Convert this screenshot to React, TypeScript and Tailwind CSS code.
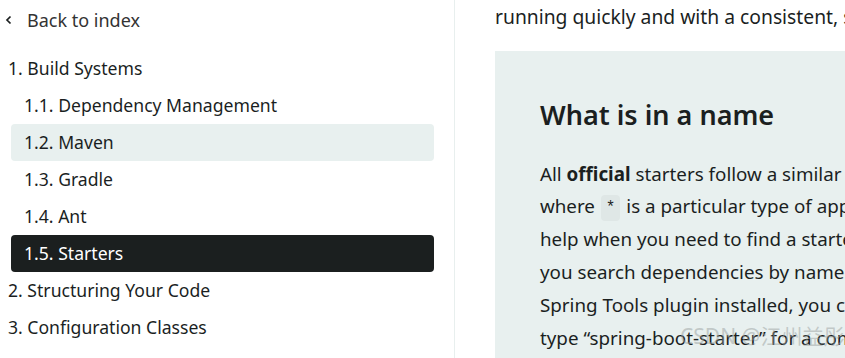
import React from "react";

const font = { fontFamily: '"Noto Sans", "Open Sans", sans-serif' };

function Chevron() {
  return (
    <svg width="8" height="10" viewBox="0 0 8 10" className="shrink-0">
      <path d="M5.5 1.5 L2 5 L5.5 8.5" fill="none" stroke="#1b1f1f" strokeWidth="1.7" />
    </svg>
  );
}

const top = "h-[37px] flex items-center pl-[8px] text-[17.6px] text-[#1b1f1f] whitespace-nowrap";
const sub = "h-[37px] flex items-center pl-[13px] text-[17.6px] text-[#1b1f1f] whitespace-nowrap rounded-[4px]";

export default function App() {
  return (
    <div className="w-[845px] h-[358px] overflow-hidden bg-white flex" style={font}>
      <div className="w-[455px] shrink-0 border-r border-[#e8efee] h-full overflow-hidden">
        <div className="h-[40px] flex items-center pl-[5px] gap-[14px] text-[18px] text-[#333]">
          <Chevron />
          <span>Back to index</span>
        </div>
        <div className="mt-[10px]">
          <div className={top}>1. Build Systems</div>
          <div className="ml-[11px] mr-[20px]">
            <div className={sub}>1.1. Dependency Management</div>
            <div className={sub + " bg-[#e8f0ef]"}>1.2. Maven</div>
            <div className={sub}>1.3. Gradle</div>
            <div className={sub}>1.4. Ant</div>
            <div className={sub + " bg-[#1b1f1f] text-white"}>1.5. Starters</div>
          </div>
          <div className={top}>2. Structuring Your Code</div>
          <div className={top}>3. Configuration Classes</div>
          <div className="ml-[11px] mr-[20px] mt-[3px]">
            <div className={sub}>3.1. Importing Additional Configuration Classes</div>
          </div>
        </div>
      </div>
      <div className="flex-1 pl-[40px] overflow-hidden relative">
        <p className="h-[33px] leading-[33px] text-[19.3px] text-[#1b1f1f] whitespace-nowrap">
          running quickly and with a consistent, supported set of managed transitive dependencies.
        </p>
        <div className="mt-[18px] bg-[#e8f0ef] pl-[45px] pt-[44px] w-[700px] h-[320px]">
          <h3 className="text-[27px] font-semibold text-[#1b1f1f] leading-[40px] whitespace-nowrap">What is in a name</h3>
          <div className="mt-[22.6px] text-[18.8px] leading-[32.8px] text-[#1b1f1f] whitespace-nowrap">
            <div>
              All <strong className="font-bold">official</strong> starters follow a similar naming pattern; spring-boot-starter-*,
            </div>
            <div>
              where{" "}
              <code
                className="inline-block px-[5px] mx-[1px] rounded-[4px] bg-[#dfe7e6] text-[16px] leading-[26px] align-middle"
                style={{ fontFamily: '"Liberation Mono", monospace' }}
              >
                *
              </code>{" "}
              is a particular type of application. This naming structure is intended to
            </div>
            <div>help when you need to find a starter. The Maven integration in many IDEs lets</div>
            <div>you search dependencies by name. For example, with the appropriate Eclipse or</div>
            <div>Spring Tools plugin installed, you can press ctrl-space in the POM editor and</div>
            <div>type “spring-boot-starter” for a complete list.</div>
          </div>
        </div>
        <div
          className="absolute left-[225px] top-[321px] text-[21px] text-[#9aa0a0]/50 whitespace-nowrap pointer-events-none"
          style={{ fontFamily: '"Noto Sans", "Noto Sans CJK SC", sans-serif' }}
        >
          CSDN @江州益彤
        </div>
      </div>
    </div>
  );
}
